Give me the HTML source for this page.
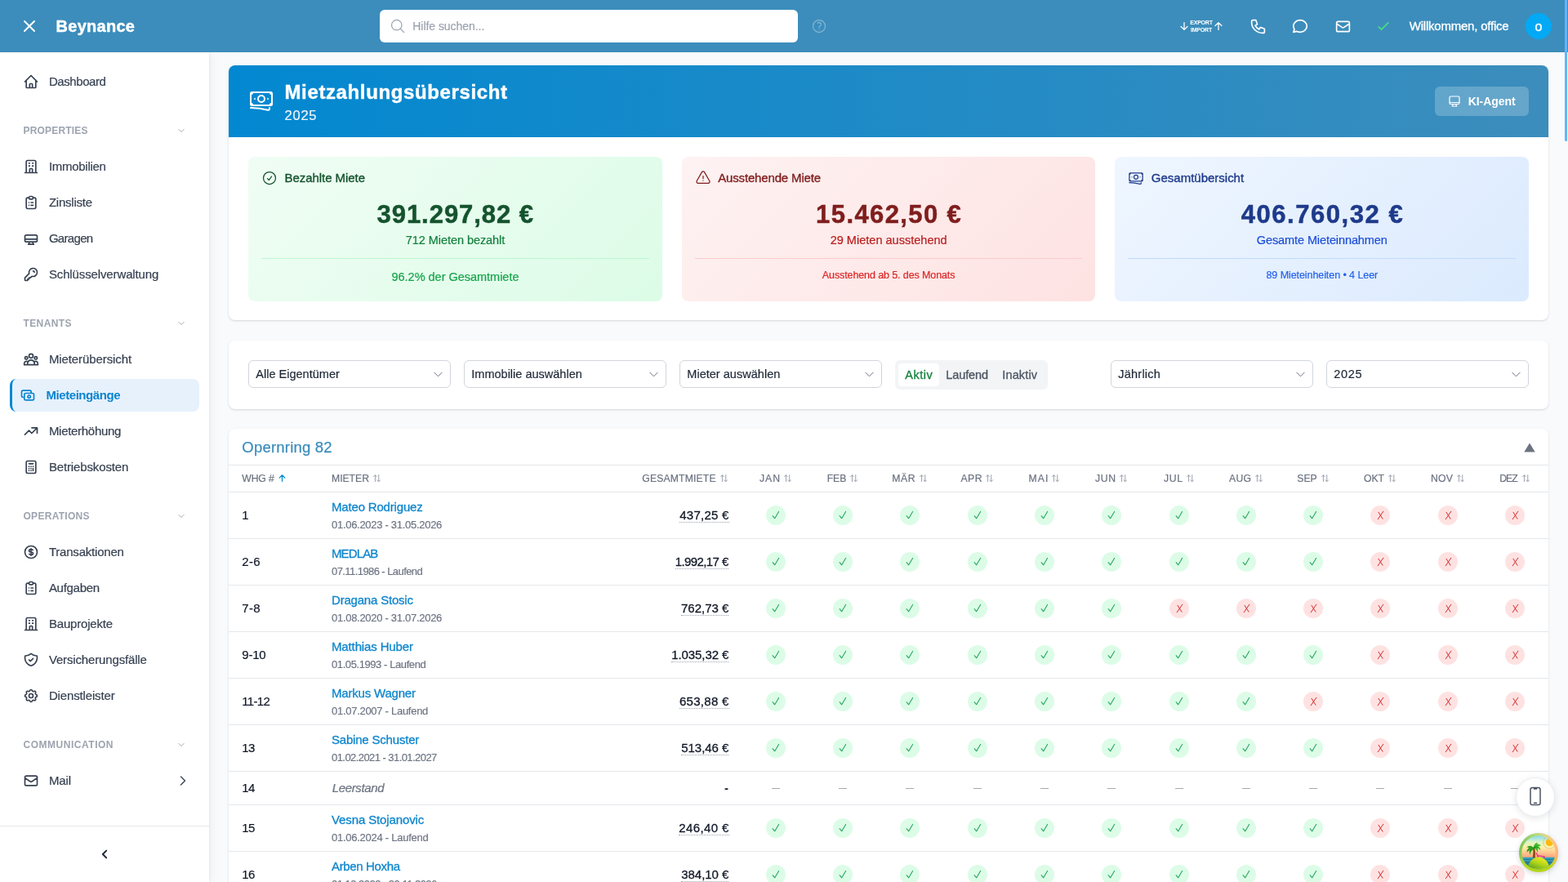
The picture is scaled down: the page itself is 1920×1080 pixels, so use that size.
<!DOCTYPE html>
<html lang="de">
<head>
<meta charset="utf-8">
<title>Beynance – Mietzahlungsübersicht</title>
<style>
*{box-sizing:border-box;margin:0;padding:0}
html,body{width:1920px;height:1080px;overflow:hidden}
body{font-family:"Liberation Sans",sans-serif;background:#f8fafc;color:#111827;position:relative}
#app{position:absolute;left:0;top:0;width:1920px;height:1080px;overflow:hidden;will-change:transform;background:#f8fafc}
.abs{position:absolute}
svg{display:block}
#topbar{position:absolute;left:0;top:0;width:1920px;height:64px;background:#3c8dbc;z-index:30}
#search{position:absolute;left:465px;top:12px;width:512px;height:40px;background:#fff;border-radius:6px}
#avatar{position:absolute;left:1868px;top:16px;width:32px;height:32px;border-radius:50%;background:#03a9f4;color:#fff;text-align:center;line-height:33px;font-size:16px;-webkit-text-stroke:.4px #fff}
.expimp{position:absolute;left:1456px;top:23px;font-size:7px;line-height:9px;color:#fff;font-weight:700;letter-spacing:-.2px;text-align:center;width:30px}
#sidebar{position:absolute;left:0;top:64px;width:256px;height:1016px;background:#fff;box-shadow:1px 0 3px rgba(15,23,42,.05),4px 0 12px rgba(15,23,42,.04);z-index:20}
.nav{position:absolute;left:12px;width:232px;height:40px;border-radius:8px}
.nav svg{position:absolute;left:16px;top:10px;color:#374151}
.nav.active{background:#e6f1fc;border-left:3px solid #0288d1}
.nav.active svg{left:9px;color:#0a84d0}
.sec svg{position:absolute;left:217px;color:#9ca3af}
#sidefoot{position:absolute;left:0;top:947px;width:256px;height:69px;border-top:1px solid #e5e7eb}
.card{position:absolute;background:#fff;border-radius:8px;box-shadow:0 1px 3px rgba(15,23,42,.10),0 1px 2px rgba(15,23,42,.06)}
#hero{position:absolute;left:280px;top:80px;width:1616px;height:88px;border-radius:8px 8px 0 0;background:linear-gradient(90deg,#0288d1 0%,#3c8dbc 100%)}
#kibtn{position:absolute;left:1477px;top:26px;width:115px;height:36px;border-radius:6px;background:rgba(255,255,255,.22)}
.stat{position:absolute;top:192px;width:506.67px;height:177px;border-radius:8px}
.stat .hr{position:absolute;left:16px;right:16px;top:124px;height:1px}
.sel{position:absolute;top:24px;width:248px;height:34px;border:1px solid #d1d5db;border-radius:6px;background:#fff}
.sel svg{position:absolute;right:7.5px;top:9px;color:#6b7280}
.row{position:absolute;left:0;width:1616px;border-top:1px solid #e5e7eb}
.dot{position:absolute;width:24px;height:24px;border-radius:50%}
.dot.g{background:#dcfce7}
.dot.r{background:#fee2e2}
.dash{position:absolute;width:10.6px;height:1px;background:#a3a8b1}
.th{position:absolute;top:0;height:33px}
</style>
</head>
<body>
<div id="app">

<div id="topbar">
<svg class="" width="24" height="24" viewBox="0 0 24 24" fill="none" stroke="#fff" stroke-width="2" stroke-linecap="round" stroke-linejoin="round" style="position:absolute;left:24px;top:20px"><path d="M6 18L18 6M6 6l12 12"/></svg>
<div style="position:absolute;top:18px;height:28px;line-height:28px;font-size:20px;color:#fff;white-space:nowrap;letter-spacing:0.286px;font-weight:700;-webkit-text-stroke:0.45px #fff;left:68.50px;">Beynance</div>
<div id="search"><svg class="" width="20" height="20" viewBox="0 0 24 24" fill="none" stroke="#9ca3af" stroke-width="1.5" stroke-linecap="round" stroke-linejoin="round" style="position:absolute;left:12px;top:10px"><path d="M21 21l-5.197-5.197m0 0A7.5 7.5 0 105.196 5.196a7.5 7.5 0 0010.607 10.607z"/></svg><div style="position:absolute;top:10px;height:20px;line-height:20px;font-size:14px;color:#9ca3af;white-space:nowrap;letter-spacing:-0.05px;-webkit-text-stroke:0.2px #9ca3af;left:40.30px;">Hilfe suchen...</div></div>
<svg class="" width="20" height="20" viewBox="0 0 24 24" fill="none" stroke="rgba(255,255,255,.35)" stroke-width="1.5" stroke-linecap="round" stroke-linejoin="round" style="position:absolute;left:993px;top:22px"><path d="M9.879 7.519c1.171-1.025 3.071-1.025 4.242 0 1.172 1.025 1.172 2.687 0 3.712-.203.179-.43.326-.67.442-.745.361-1.45.999-1.45 1.827v.75M21 12a9 9 0 11-18 0 9 9 0 0118 0zm-9 5.25h.008v.008H12v-.008z"/></svg>
<svg class="" width="14" height="14" viewBox="0 0 24 24" fill="none" stroke="#fff" stroke-width="2.2" stroke-linecap="round" stroke-linejoin="round" style="position:absolute;left:1443px;top:25px"><path d="M12 4.5v15m0 0l6.75-6.75M12 19.5l-6.75-6.75"/></svg>
<div class="expimp">EXPORT<br>IMPORT</div>
<svg class="" width="14" height="14" viewBox="0 0 24 24" fill="none" stroke="#fff" stroke-width="2.2" stroke-linecap="round" stroke-linejoin="round" style="position:absolute;left:1485px;top:25px"><path d="M12 19.5v-15m0 0l-6.75 6.75M12 4.5l6.75 6.75"/></svg>
<svg class="" width="21" height="21" viewBox="0 0 24 24" fill="none" stroke="#fff" stroke-width="1.9" stroke-linecap="round" stroke-linejoin="round" style="position:absolute;left:1529.5px;top:21.5px"><path d="M3 5a2 2 0 012-2h3.28a1 1 0 01.948.684l1.498 4.493a1 1 0 01-.502 1.21l-2.257 1.13a11.042 11.042 0 005.516 5.516l1.13-2.257a1 1 0 011.21-.502l4.493 1.498a1 1 0 01.684.949V19a2 2 0 01-2 2h-1C9.716 21 3 14.284 3 6V5z"/></svg>
<svg class="" width="22" height="22" viewBox="0 0 24 24" fill="none" stroke="#fff" stroke-width="1.9" stroke-linecap="round" stroke-linejoin="round" style="position:absolute;left:1581px;top:21px"><path d="M21 12c0 4.418-4.03 8-9 8a9.863 9.863 0 01-4.255-.949L3 20l1.395-3.72C3.512 15.042 3 13.574 3 12c0-4.418 4.03-8 9-8s9 3.582 9 8z"/></svg>
<svg class="" width="21" height="21" viewBox="0 0 24 24" fill="none" stroke="#fff" stroke-width="1.9" stroke-linecap="round" stroke-linejoin="round" style="position:absolute;left:1633.5px;top:21.8px"><path d="M3 8l7.89 5.26a2 2 0 002.22 0L21 8M5 19h14a2 2 0 002-2V7a2 2 0 00-2-2H5a2 2 0 00-2 2v10a2 2 0 002 2z"/></svg>
<svg class="" width="20" height="20" viewBox="0 0 24 24" fill="none" stroke="#4ade80" stroke-width="1.9" stroke-linecap="round" stroke-linejoin="round" style="position:absolute;left:1684.2px;top:21.7px"><path d="M5 13l4 4L19 7"/></svg>
<div style="position:absolute;top:22px;height:20px;line-height:20px;font-size:15px;color:#fff;white-space:nowrap;letter-spacing:-0.211px;-webkit-text-stroke:0.3px #fff;left:1725.70px;">Willkommen, office</div>
<div id="avatar">o</div>
</div>
<div id="sidebar">
<div class="nav" style="top:16px"><svg class="" width="20" height="20" viewBox="0 0 24 24" fill="none" stroke="currentColor" stroke-width="2" stroke-linecap="round" stroke-linejoin="round" style=""><path d="M3 12l2-2m0 0l7-7 7 7M5 10v10a1 1 0 001 1h3m10-11l2 2m-2-2v10a1 1 0 01-1 1h-3m-6 0a1 1 0 001-1v-4a1 1 0 011-1h2a1 1 0 011 1v4a1 1 0 001 1m-6 0h6"/></svg><div style="position:absolute;top:10px;height:20px;line-height:20px;font-size:15px;color:#374151;white-space:nowrap;letter-spacing:-0.422px;-webkit-text-stroke:0.2px #374151;left:47.90px;">Dashboard</div></div>
<div class="sec"><div style="position:absolute;top:88px;height:16px;line-height:16px;font-size:12px;color:#9da4b0;white-space:nowrap;letter-spacing:0.183px;font-weight:700;left:28.50px;">PROPERTIES</div><svg class="" width="10" height="10" viewBox="0 0 24 24" fill="none" stroke="#8d95a3" stroke-width="2" stroke-linecap="round" stroke-linejoin="round" style="top:91px"><path d="M19.5 8.25l-7.5 7.5-7.5-7.5"/></svg></div>
<div class="nav" style="top:120px"><svg class="" width="20" height="20" viewBox="0 0 24 24" fill="none" stroke="currentColor" stroke-width="2" stroke-linecap="round" stroke-linejoin="round" style=""><path d="M19 21V5a2 2 0 00-2-2H7a2 2 0 00-2 2v16m14 0h2m-2 0h-5m-9 0H3m2 0h5M9 7h1m-1 4h1m4-4h1m-1 4h1m-5 10v-5a1 1 0 011-1h2a1 1 0 011 1v5m-4 0h4"/></svg><div style="position:absolute;top:10px;height:20px;line-height:20px;font-size:15px;color:#374151;white-space:nowrap;letter-spacing:-0.281px;-webkit-text-stroke:0.2px #374151;left:47.90px;">Immobilien</div></div>
<div class="nav" style="top:164px"><svg class="" width="20" height="20" viewBox="0 0 24 24" fill="none" stroke="currentColor" stroke-width="2" stroke-linecap="round" stroke-linejoin="round" style=""><path d="M9 5H7a2 2 0 00-2 2v12a2 2 0 002 2h10a2 2 0 002-2V7a2 2 0 00-2-2h-2M9 5a2 2 0 002 2h2a2 2 0 002-2M9 5a2 2 0 012-2h2a2 2 0 012 2m-3 7h3m-3 4h3m-6-4h.01M9 16h.01"/></svg><div style="position:absolute;top:10px;height:20px;line-height:20px;font-size:15px;color:#374151;white-space:nowrap;letter-spacing:-0.221px;-webkit-text-stroke:0.2px #374151;left:47.90px;">Zinsliste</div></div>
<div class="nav" style="top:208px"><svg class="" width="20" height="20" viewBox="0 0 24 24" fill="none" stroke="currentColor" stroke-width="2" stroke-linecap="round" stroke-linejoin="round" style=""><path d="M5 7h14a2 2 0 012 2v6a2 2 0 01-2 2H5a2 2 0 01-2-2V9a2 2 0 012-2zM3 13h18M9.75 17L9 19.6l-1 1h8l-1-1-.75-2.6"/></svg><div style="position:absolute;top:10px;height:20px;line-height:20px;font-size:15px;color:#374151;white-space:nowrap;letter-spacing:-0.688px;-webkit-text-stroke:0.2px #374151;left:47.90px;">Garagen</div></div>
<div class="nav" style="top:252px"><svg class="" width="20" height="20" viewBox="0 0 24 24" fill="none" stroke="currentColor" stroke-width="2" stroke-linecap="round" stroke-linejoin="round" style=""><path d="M15 7a2 2 0 012 2m4 0a6 6 0 01-7.743 5.743L11 17H9v2H7v2H4a1 1 0 01-1-1v-2.586a1 1 0 01.293-.707l5.964-5.964A6 6 0 1121 9z"/></svg><div style="position:absolute;top:10px;height:20px;line-height:20px;font-size:15px;color:#374151;white-space:nowrap;letter-spacing:-0.124px;-webkit-text-stroke:0.2px #374151;left:47.90px;">Schlüsselverwaltung</div></div>
<div class="sec"><div style="position:absolute;top:324px;height:16px;line-height:16px;font-size:12px;color:#9da4b0;white-space:nowrap;letter-spacing:0.389px;font-weight:700;left:28.50px;">TENANTS</div><svg class="" width="10" height="10" viewBox="0 0 24 24" fill="none" stroke="#8d95a3" stroke-width="2" stroke-linecap="round" stroke-linejoin="round" style="top:327px"><path d="M19.5 8.25l-7.5 7.5-7.5-7.5"/></svg></div>
<div class="nav" style="top:356px"><svg class="" width="20" height="20" viewBox="0 0 24 24" fill="none" stroke="currentColor" stroke-width="2" stroke-linecap="round" stroke-linejoin="round" style=""><path d="M17 20h5v-2a3 3 0 00-5.356-1.857M17 20H7m10 0v-2c0-.656-.126-1.283-.356-1.857M7 20H2v-2a3 3 0 015.356-1.857M7 20v-2c0-.656.126-1.283.356-1.857m0 0a5.002 5.002 0 019.288 0M15 7a3 3 0 11-6 0 3 3 0 016 0zm6 3a2 2 0 11-4 0 2 2 0 014 0zM7 10a2 2 0 11-4 0 2 2 0 014 0z"/></svg><div style="position:absolute;top:10px;height:20px;line-height:20px;font-size:15px;color:#374151;white-space:nowrap;letter-spacing:-0.092px;-webkit-text-stroke:0.2px #374151;left:47.90px;">Mieterübersicht</div></div>
<div class="nav active" style="top:400px"><svg class="" width="20" height="20" viewBox="0 0 24 24" fill="none" stroke="currentColor" stroke-width="2" stroke-linecap="round" stroke-linejoin="round" style=""><path d="M17 9V7a2 2 0 00-2-2H5a2 2 0 00-2 2v6a2 2 0 002 2h2m2 4h10a2 2 0 002-2v-6a2 2 0 00-2-2H9a2 2 0 00-2 2v6a2 2 0 002 2zm7-5a2 2 0 11-4 0 2 2 0 014 0z"/></svg><div style="position:absolute;top:10px;height:20px;line-height:20px;font-size:15px;color:#0a84d0;white-space:nowrap;letter-spacing:-0.441px;font-weight:700;left:41.50px;">Mieteingänge</div></div>
<div class="nav" style="top:444px"><svg class="" width="20" height="20" viewBox="0 0 24 24" fill="none" stroke="currentColor" stroke-width="2" stroke-linecap="round" stroke-linejoin="round" style=""><path d="M13 7h8m0 0v8m0-8l-8 8-4-4-6 6"/></svg><div style="position:absolute;top:10px;height:20px;line-height:20px;font-size:15px;color:#374151;white-space:nowrap;letter-spacing:-0.293px;-webkit-text-stroke:0.2px #374151;left:47.90px;">Mieterhöhung</div></div>
<div class="nav" style="top:488px"><svg class="" width="20" height="20" viewBox="0 0 24 24" fill="none" stroke="currentColor" stroke-width="2" stroke-linecap="round" stroke-linejoin="round" style=""><path d="M9 7h6m0 10v-3m-3 3h.01M9 17h.01M9 14h.01M12 14h.01M15 11h.01M12 11h.01M9 11h.01M7 21h10a2 2 0 002-2V5a2 2 0 00-2-2H7a2 2 0 00-2 2v14a2 2 0 002 2z"/></svg><div style="position:absolute;top:10px;height:20px;line-height:20px;font-size:15px;color:#374151;white-space:nowrap;letter-spacing:-0.133px;-webkit-text-stroke:0.2px #374151;left:47.90px;">Betriebskosten</div></div>
<div class="sec"><div style="position:absolute;top:560px;height:16px;line-height:16px;font-size:12px;color:#9da4b0;white-space:nowrap;letter-spacing:0.283px;font-weight:700;left:28.50px;">OPERATIONS</div><svg class="" width="10" height="10" viewBox="0 0 24 24" fill="none" stroke="#8d95a3" stroke-width="2" stroke-linecap="round" stroke-linejoin="round" style="top:563px"><path d="M19.5 8.25l-7.5 7.5-7.5-7.5"/></svg></div>
<div class="nav" style="top:592px"><svg class="" width="20" height="20" viewBox="0 0 24 24" fill="none" stroke="currentColor" stroke-width="2" stroke-linecap="round" stroke-linejoin="round" style=""><path d="M12 8c-1.657 0-3 .895-3 2s1.343 2 3 2 3 .895 3 2-1.343 2-3 2m0-8c1.11 0 2.08.402 2.599 1M12 8V7m0 1v8m0 0v1m0-1c-1.11 0-2.08-.402-2.599-1M21 12a9 9 0 11-18 0 9 9 0 0118 0z"/></svg><div style="position:absolute;top:10px;height:20px;line-height:20px;font-size:15px;color:#374151;white-space:nowrap;letter-spacing:-0.208px;-webkit-text-stroke:0.2px #374151;left:47.90px;">Transaktionen</div></div>
<div class="nav" style="top:636px"><svg class="" width="20" height="20" viewBox="0 0 24 24" fill="none" stroke="currentColor" stroke-width="2" stroke-linecap="round" stroke-linejoin="round" style=""><path d="M9 5H7a2 2 0 00-2 2v12a2 2 0 002 2h10a2 2 0 002-2V7a2 2 0 00-2-2h-2M9 5a2 2 0 002 2h2a2 2 0 002-2M9 5a2 2 0 012-2h2a2 2 0 012 2m-3 7h3m-3 4h3m-6-4h.01M9 16h.01"/></svg><div style="position:absolute;top:10px;height:20px;line-height:20px;font-size:15px;color:#374151;white-space:nowrap;letter-spacing:-0.283px;-webkit-text-stroke:0.2px #374151;left:47.90px;">Aufgaben</div></div>
<div class="nav" style="top:680px"><svg class="" width="20" height="20" viewBox="0 0 24 24" fill="none" stroke="currentColor" stroke-width="2" stroke-linecap="round" stroke-linejoin="round" style=""><path d="M19 21V5a2 2 0 00-2-2H7a2 2 0 00-2 2v16m14 0h2m-2 0h-5m-9 0H3m2 0h5M9 7h1m-1 4h1m4-4h1m-1 4h1m-5 10v-5a1 1 0 011-1h2a1 1 0 011 1v5m-4 0h4"/></svg><div style="position:absolute;top:10px;height:20px;line-height:20px;font-size:15px;color:#374151;white-space:nowrap;letter-spacing:-0.181px;-webkit-text-stroke:0.2px #374151;left:47.90px;">Bauprojekte</div></div>
<div class="nav" style="top:724px"><svg class="" width="20" height="20" viewBox="0 0 24 24" fill="none" stroke="currentColor" stroke-width="2" stroke-linecap="round" stroke-linejoin="round" style=""><path d="M9 12l2 2 4-4m5.618-4.016A11.955 11.955 0 0112 2.944a11.955 11.955 0 01-8.618 3.04A12.02 12.02 0 003 9c0 5.591 3.824 10.29 9 11.622 5.176-1.332 9-6.03 9-11.622 0-1.042-.133-2.052-.382-3.016z"/></svg><div style="position:absolute;top:10px;height:20px;line-height:20px;font-size:15px;color:#374151;white-space:nowrap;letter-spacing:-0.151px;-webkit-text-stroke:0.2px #374151;left:47.90px;">Versicherungsfälle</div></div>
<div class="nav" style="top:768px"><svg class="" width="20" height="20" viewBox="0 0 24 24" fill="none" stroke="currentColor" stroke-width="2" stroke-linecap="round" stroke-linejoin="round" style=""><path d="M10.325 4.317c.426-1.756 2.924-1.756 3.35 0a1.724 1.724 0 002.573 1.066c1.543-.94 3.31.826 2.37 2.37a1.724 1.724 0 001.065 2.572c1.756.426 1.756 2.924 0 3.35a1.724 1.724 0 00-1.066 2.573c.94 1.543-.826 3.31-2.37 2.37a1.724 1.724 0 00-2.572 1.065c-.426 1.756-2.924 1.756-3.35 0a1.724 1.724 0 00-2.573-1.066c-1.543.94-3.31-.826-2.37-2.37a1.724 1.724 0 00-1.065-2.572c-1.756-.426-1.756-2.924 0-3.35a1.724 1.724 0 001.066-2.573c-.94-1.543.826-3.31 2.37-2.37.996.608 2.296.07 2.572-1.065z"/><path d="M15 12a3 3 0 11-6 0 3 3 0 016 0z"/></svg><div style="position:absolute;top:10px;height:20px;line-height:20px;font-size:15px;color:#374151;white-space:nowrap;letter-spacing:-0.148px;-webkit-text-stroke:0.2px #374151;left:47.90px;">Dienstleister</div></div>
<div class="sec"><div style="position:absolute;top:840px;height:16px;line-height:16px;font-size:12px;color:#9da4b0;white-space:nowrap;letter-spacing:0.52px;font-weight:700;left:28.50px;">COMMUNICATION</div><svg class="" width="10" height="10" viewBox="0 0 24 24" fill="none" stroke="#8d95a3" stroke-width="2" stroke-linecap="round" stroke-linejoin="round" style="top:843px"><path d="M19.5 8.25l-7.5 7.5-7.5-7.5"/></svg></div>
<div class="nav" style="top:872px"><svg class="" width="20" height="20" viewBox="0 0 24 24" fill="none" stroke="currentColor" stroke-width="2" stroke-linecap="round" stroke-linejoin="round" style=""><path d="M3 8l7.89 5.26a2 2 0 002.22 0L21 8M5 19h14a2 2 0 002-2V7a2 2 0 00-2-2H5a2 2 0 00-2 2v10a2 2 0 002 2z"/></svg><div style="position:absolute;top:10px;height:20px;line-height:20px;font-size:15px;color:#374151;white-space:nowrap;letter-spacing:-0.087px;-webkit-text-stroke:0.2px #374151;left:47.90px;">Mail</div><svg class="" width="16" height="16" viewBox="0 0 24 24" fill="none" stroke="#374151" stroke-width="2" stroke-linecap="round" stroke-linejoin="round" style="left:204px;top:12px"><path d="M8.25 4.5l7.5 7.5-7.5 7.5"/></svg></div>
<div id="sidefoot"><svg class="" width="14" height="14" viewBox="0 0 24 24" fill="none" stroke="#1f2937" stroke-width="3.5" stroke-linecap="round" stroke-linejoin="round" style="position:absolute;left:121px;top:27px"><path d="M15.75 19.5L8.25 12l7.5-7.5"/></svg></div>
</div>
<div class="card" style="left:280px;top:80px;width:1616px;height:312.3px"></div>
<div id="hero">
<svg class="" width="32" height="32" viewBox="0 0 24 24" fill="none" stroke="#fff" stroke-width="1.5" stroke-linecap="round" stroke-linejoin="round" style="position:absolute;left:24px;top:27.3px"><path d="M2.25 18.75a60.07 60.07 0 0115.797 2.101c.727.198 1.453-.342 1.453-1.096V18.75M3.75 4.5v.75A.75.75 0 013 6h-.75m0 0v-.375c0-.621.504-1.125 1.125-1.125H20.25M2.25 6v9m18-10.5v.75c0 .414.336.75.75.75h.75m-1.5-1.5h.375c.621 0 1.125.504 1.125 1.125v9.75c0 .621-.504 1.125-1.125 1.125h-.375m1.5-1.5H21a.75.75 0 00-.75.75v.75m0 0H3.75m0 0h-.375a1.125 1.125 0 01-1.125-1.125V15m1.5 1.5v-.75A.75.75 0 003 15h-.75M15 10.5a3 3 0 11-6 0 3 3 0 016 0zm3 0h.008v.008H18V10.5zm-12 0h.008v.008H6V10.5z"/></svg>
<div style="position:absolute;top:16px;height:34px;line-height:34px;font-size:24px;color:#fff;white-space:nowrap;letter-spacing:0.623px;font-weight:700;-webkit-text-stroke:0.4px #fff;left:68.50px;">Mietzahlungsübersicht</div>
<div style="position:absolute;top:49px;height:24px;line-height:24px;font-size:16.5px;color:rgba(255,255,255,.92);white-space:nowrap;letter-spacing:0.763px;-webkit-text-stroke:0.2px rgba(255,255,255,.92);left:68.50px;">2025</div>
<div id="kibtn"><svg class="" width="16" height="16" viewBox="0 0 24 24" fill="none" stroke="#fff" stroke-width="1.8" stroke-linecap="round" stroke-linejoin="round" style="position:absolute;left:16px;top:9.5px"><path d="M9 17.25v1.007a3 3 0 01-.879 2.122L7.5 21h9l-.621-.621A3 3 0 0115 18.257V17.25m6-12V15a2.25 2.25 0 01-2.25 2.25H5.25A2.25 2.25 0 013 15V5.25m18 0A2.25 2.25 0 0018.75 3H5.25A2.25 2.25 0 003 5.25m18 0V12a2.25 2.25 0 01-2.25 2.25H5.25A2.25 2.25 0 013 12V5.25"/></svg><div style="position:absolute;top:8px;height:20px;line-height:20px;font-size:14px;color:#fff;white-space:nowrap;letter-spacing:-0.046px;font-weight:700;left:40.70px;">KI-Agent</div></div>
</div>
<div class="stat" style="left:304px;background:linear-gradient(135deg,#f0fdf4 0%,#dcfce7 100%)">
<svg class="" width="20" height="20" viewBox="0 0 24 24" fill="none" stroke="#14532d" stroke-width="1.5" stroke-linecap="round" stroke-linejoin="round" style="position:absolute;left:16px;top:16px"><path d="M9 12.75L11.25 15 15 9.75M21 12a9 9 0 11-18 0 9 9 0 0118 0z"/></svg>
<div style="position:absolute;top:16px;height:20px;line-height:20px;font-size:15px;color:#14532d;white-space:nowrap;letter-spacing:-0.056px;-webkit-text-stroke:0.35px #14532d;left:44.50px;">Bezahlte Miete</div>
<div style="position:absolute;top:49px;height:44px;line-height:44px;font-size:31px;color:#14532d;white-space:nowrap;letter-spacing:0.963px;font-weight:700;-webkit-text-stroke:0.5px #14532d;left:-146.22px;width:800px;text-align:center;">391.297,82 €</div>
<div style="position:absolute;top:92px;height:20px;line-height:20px;font-size:14.5px;color:#15803d;white-space:nowrap;letter-spacing:-0.054px;-webkit-text-stroke:0.2px #15803d;left:-146.53px;width:800px;text-align:center;">712 Mieten bezahlt</div>
<div class="hr" style="background:#bbf7d0"></div>
<div style="position:absolute;top:137px;height:20px;line-height:20px;font-size:14.5px;color:#16a34a;white-space:nowrap;letter-spacing:-0.018px;-webkit-text-stroke:0.2px #16a34a;left:-146.51px;width:800px;text-align:center;">96.2% der Gesamtmiete</div>
</div>
<div class="stat" style="left:834.67px;background:linear-gradient(135deg,#fef2f2 0%,#fee2e2 100%)">
<svg class="" width="20" height="20" viewBox="0 0 24 24" fill="none" stroke="#7f1d1d" stroke-width="1.5" stroke-linecap="round" stroke-linejoin="round" style="position:absolute;left:16px;top:16px"><path d="M12 9v3.75m-9.303 3.376c-.866 1.5.217 3.374 1.948 3.374h14.71c1.73 0 2.813-1.874 1.948-3.374L13.949 3.378c-.866-1.5-3.032-1.5-3.898 0L2.697 16.126zM12 15.75h.007v.008H12v-.008z"/></svg>
<div style="position:absolute;top:16px;height:20px;line-height:20px;font-size:15px;color:#7f1d1d;white-space:nowrap;letter-spacing:-0.151px;-webkit-text-stroke:0.35px #7f1d1d;left:44.50px;">Ausstehende Miete</div>
<div style="position:absolute;top:49px;height:44px;line-height:44px;font-size:31px;color:#7f1d1d;white-space:nowrap;letter-spacing:1.393px;font-weight:700;-webkit-text-stroke:0.5px #7f1d1d;left:-146.01px;width:800px;text-align:center;">15.462,50 €</div>
<div style="position:absolute;top:92px;height:20px;line-height:20px;font-size:14.5px;color:#b91c1c;white-space:nowrap;letter-spacing:0.017px;-webkit-text-stroke:0.2px #b91c1c;left:-146.49px;width:800px;text-align:center;">29 Mieten ausstehend</div>
<div class="hr" style="background:#fecaca"></div>
<div style="position:absolute;top:136px;height:18px;line-height:18px;font-size:12.5px;color:#dc2626;white-space:nowrap;letter-spacing:-0.107px;-webkit-text-stroke:0.2px #dc2626;left:-146.55px;width:800px;text-align:center;">Ausstehend ab 5. des Monats</div>
</div>
<div class="stat" style="left:1365.33px;background:linear-gradient(135deg,#eff6ff 0%,#dbeafe 100%)">
<svg class="" width="20" height="20" viewBox="0 0 24 24" fill="none" stroke="#1e3a8a" stroke-width="1.5" stroke-linecap="round" stroke-linejoin="round" style="position:absolute;left:16px;top:16px"><path d="M2.25 18.75a60.07 60.07 0 0115.797 2.101c.727.198 1.453-.342 1.453-1.096V18.75M3.75 4.5v.75A.75.75 0 013 6h-.75m0 0v-.375c0-.621.504-1.125 1.125-1.125H20.25M2.25 6v9m18-10.5v.75c0 .414.336.75.75.75h.75m-1.5-1.5h.375c.621 0 1.125.504 1.125 1.125v9.75c0 .621-.504 1.125-1.125 1.125h-.375m1.5-1.5H21a.75.75 0 00-.75.75v.75m0 0H3.75m0 0h-.375a1.125 1.125 0 01-1.125-1.125V15m1.5 1.5v-.75A.75.75 0 003 15h-.75M15 10.5a3 3 0 11-6 0 3 3 0 016 0zm3 0h.008v.008H18V10.5zm-12 0h.008v.008H6V10.5z"/></svg>
<div style="position:absolute;top:16px;height:20px;line-height:20px;font-size:15px;color:#1e3a8a;white-space:nowrap;letter-spacing:-0.006px;-webkit-text-stroke:0.35px #1e3a8a;left:44.50px;">Gesamtübersicht</div>
<div style="position:absolute;top:49px;height:44px;line-height:44px;font-size:31px;color:#1e3a8a;white-space:nowrap;letter-spacing:1.545px;font-weight:700;-webkit-text-stroke:0.5px #1e3a8a;left:-145.93px;width:800px;text-align:center;">406.760,32 €</div>
<div style="position:absolute;top:92px;height:20px;line-height:20px;font-size:14.5px;color:#1d4ed8;white-space:nowrap;letter-spacing:-0.1px;-webkit-text-stroke:0.2px #1d4ed8;left:-146.55px;width:800px;text-align:center;">Gesamte Mieteinnahmen</div>
<div class="hr" style="background:#bfdbfe"></div>
<div style="position:absolute;top:136px;height:18px;line-height:18px;font-size:12.5px;color:#2563eb;white-space:nowrap;letter-spacing:-0.075px;-webkit-text-stroke:0.2px #2563eb;left:-146.54px;width:800px;text-align:center;">89 Mieteinheiten • 4 Leer</div>
</div>
<div class="card" style="left:280px;top:417px;width:1616px;height:84px">
<div class="sel" style="left:24px"><div style="position:absolute;top:6px;height:20px;line-height:20px;font-size:14.5px;color:#1f2937;white-space:nowrap;letter-spacing:0.01px;-webkit-text-stroke:0.2px #1f2937;left:8.30px;">Alle Eigentümer</div><svg class="" width="15" height="15" viewBox="0 0 24 24" fill="none" stroke="currentColor" stroke-width="1.6" stroke-linecap="round" stroke-linejoin="round" style=""><path d="M19.5 8.25l-7.5 7.5-7.5-7.5"/></svg></div>
<div class="sel" style="left:288px"><div style="position:absolute;top:6px;height:20px;line-height:20px;font-size:14.5px;color:#1f2937;white-space:nowrap;letter-spacing:0.005px;-webkit-text-stroke:0.2px #1f2937;left:8.30px;">Immobilie auswählen</div><svg class="" width="15" height="15" viewBox="0 0 24 24" fill="none" stroke="currentColor" stroke-width="1.6" stroke-linecap="round" stroke-linejoin="round" style=""><path d="M19.5 8.25l-7.5 7.5-7.5-7.5"/></svg></div>
<div class="sel" style="left:552px"><div style="position:absolute;top:6px;height:20px;line-height:20px;font-size:14.5px;color:#1f2937;white-space:nowrap;letter-spacing:0.024px;-webkit-text-stroke:0.2px #1f2937;left:8.30px;">Mieter auswählen</div><svg class="" width="15" height="15" viewBox="0 0 24 24" fill="none" stroke="currentColor" stroke-width="1.6" stroke-linecap="round" stroke-linejoin="round" style=""><path d="M19.5 8.25l-7.5 7.5-7.5-7.5"/></svg></div>
<div class="abs" style="left:816px;top:24px;width:186.5px;height:35.7px;background:#f3f4f6;border-radius:6px"></div>
<div class="abs" style="left:820px;top:28px;width:50px;height:27.7px;background:#fff;border-radius:4px"></div>
<div style="position:absolute;top:32px;height:20px;line-height:20px;font-size:14.5px;color:#15803d;white-space:nowrap;letter-spacing:0.495px;-webkit-text-stroke:0.3px #15803d;left:828.30px;">Aktiv</div>
<div style="position:absolute;top:32px;height:20px;line-height:20px;font-size:14.5px;color:#4b5563;white-space:nowrap;letter-spacing:-0.12px;-webkit-text-stroke:0.3px #4b5563;left:878.30px;">Laufend</div>
<div style="position:absolute;top:32px;height:20px;line-height:20px;font-size:14.5px;color:#4b5563;white-space:nowrap;letter-spacing:0.133px;-webkit-text-stroke:0.3px #4b5563;left:947.30px;">Inaktiv</div>
<div class="sel" style="left:1080px"><div style="position:absolute;top:6px;height:20px;line-height:20px;font-size:14.5px;color:#1f2937;white-space:nowrap;letter-spacing:0.219px;-webkit-text-stroke:0.2px #1f2937;left:8.30px;">Jährlich</div><svg class="" width="15" height="15" viewBox="0 0 24 24" fill="none" stroke="currentColor" stroke-width="1.6" stroke-linecap="round" stroke-linejoin="round" style=""><path d="M19.5 8.25l-7.5 7.5-7.5-7.5"/></svg></div>
<div class="sel" style="left:1344px"><div style="position:absolute;top:6px;height:20px;line-height:20px;font-size:14.5px;color:#1f2937;white-space:nowrap;letter-spacing:0.679px;-webkit-text-stroke:0.2px #1f2937;left:8.30px;">2025</div><svg class="" width="15" height="15" viewBox="0 0 24 24" fill="none" stroke="currentColor" stroke-width="1.6" stroke-linecap="round" stroke-linejoin="round" style=""><path d="M19.5 8.25l-7.5 7.5-7.5-7.5"/></svg></div>
</div>
<div class="card" style="left:280px;top:525px;width:1616px;height:600px;overflow:hidden">
<div style="position:absolute;top:10px;height:26px;line-height:26px;font-size:18.5px;color:#3c8dbc;white-space:nowrap;letter-spacing:0.211px;-webkit-text-stroke:0.25px #3c8dbc;left:16.30px;">Opernring 82</div>
<svg class="abs" style="left:1586px;top:16.5px" width="14" height="12" viewBox="0 0 14 12"><path d="M7 .4L13.7 11.5H.3z" fill="#6b7280"/></svg>
<div class="abs" style="left:0;top:44px;width:1616px;height:34px;border-top:1px solid #e5e7eb">
<div style="position:absolute;top:7px;height:18px;line-height:18px;font-size:12.2px;color:#6b7280;white-space:nowrap;letter-spacing:-0.148px;left:16.30px;-webkit-text-stroke:.2px #6b7280;">WHG #</div>
<svg class="abs" style="left:60.60px;top:10.8px" width="9" height="9" viewBox="0 0 10 10" fill="none" stroke="#0288d1" stroke-width="1.4" stroke-linecap="round" stroke-linejoin="round"><path d="M5 9.3V.9M1.3 4.6L5 .9l3.7 3.7"/></svg>
<div style="position:absolute;top:7px;height:18px;line-height:18px;font-size:12.2px;color:#6b7280;white-space:nowrap;letter-spacing:-0.018px;left:126.00px;-webkit-text-stroke:.2px #6b7280;">MIETER</div>
<svg class="abs" style="left:177.10px;top:10.8px" width="9.4" height="9.4" viewBox="0 0 10 10" fill="none" stroke="#9aa1ad" stroke-width="1.05" stroke-linecap="round" stroke-linejoin="round"><path d="M2.6 9.4V.8M.6 2.8l2-2 2 2M7.2.6v8.6M5.2 7.2l2 2 2-2"/></svg>
<div style="position:absolute;top:7px;height:18px;line-height:18px;font-size:12.2px;color:#6b7280;white-space:nowrap;letter-spacing:0.151px;left:506.30px;-webkit-text-stroke:.2px #6b7280;">GESAMTMIETE</div>
<svg class="abs" style="left:601.80px;top:10.8px" width="9.4" height="9.4" viewBox="0 0 10 10" fill="none" stroke="#9aa1ad" stroke-width="1.05" stroke-linecap="round" stroke-linejoin="round"><path d="M2.6 9.4V.8M.6 2.8l2-2 2 2M7.2.6v8.6M5.2 7.2l2 2 2-2"/></svg>
<div style="position:absolute;top:7px;height:18px;line-height:18px;font-size:12.2px;color:#6b7280;white-space:nowrap;letter-spacing:0.977px;left:650.00px;-webkit-text-stroke:.2px #6b7280;">JAN</div>
<svg class="abs" style="left:679.80px;top:10.8px" width="9.4" height="9.4" viewBox="0 0 10 10" fill="none" stroke="#9aa1ad" stroke-width="1.05" stroke-linecap="round" stroke-linejoin="round"><path d="M2.6 9.4V.8M.6 2.8l2-2 2 2M7.2.6v8.6M5.2 7.2l2 2 2-2"/></svg>
<div style="position:absolute;top:7px;height:18px;line-height:18px;font-size:12.2px;color:#6b7280;white-space:nowrap;letter-spacing:-0.014px;left:732.65px;-webkit-text-stroke:.2px #6b7280;">FEB</div>
<svg class="abs" style="left:761.15px;top:10.8px" width="9.4" height="9.4" viewBox="0 0 10 10" fill="none" stroke="#9aa1ad" stroke-width="1.05" stroke-linecap="round" stroke-linejoin="round"><path d="M2.6 9.4V.8M.6 2.8l2-2 2 2M7.2.6v8.6M5.2 7.2l2 2 2-2"/></svg>
<div style="position:absolute;top:7px;height:18px;line-height:18px;font-size:12.2px;color:#6b7280;white-space:nowrap;letter-spacing:0.646px;left:812.30px;-webkit-text-stroke:.2px #6b7280;">MÄR</div>
<svg class="abs" style="left:845.50px;top:10.8px" width="9.4" height="9.4" viewBox="0 0 10 10" fill="none" stroke="#9aa1ad" stroke-width="1.05" stroke-linecap="round" stroke-linejoin="round"><path d="M2.6 9.4V.8M.6 2.8l2-2 2 2M7.2.6v8.6M5.2 7.2l2 2 2-2"/></svg>
<div style="position:absolute;top:7px;height:18px;line-height:18px;font-size:12.2px;color:#6b7280;white-space:nowrap;letter-spacing:0.458px;left:896.50px;-webkit-text-stroke:.2px #6b7280;">APR</div>
<svg class="abs" style="left:927.30px;top:10.8px" width="9.4" height="9.4" viewBox="0 0 10 10" fill="none" stroke="#9aa1ad" stroke-width="1.05" stroke-linecap="round" stroke-linejoin="round"><path d="M2.6 9.4V.8M.6 2.8l2-2 2 2M7.2.6v8.6M5.2 7.2l2 2 2-2"/></svg>
<div style="position:absolute;top:7px;height:18px;line-height:18px;font-size:12.2px;color:#6b7280;white-space:nowrap;letter-spacing:1.154px;left:979.50px;-webkit-text-stroke:.2px #6b7280;">MAI</div>
<svg class="abs" style="left:1008.30px;top:10.8px" width="9.4" height="9.4" viewBox="0 0 10 10" fill="none" stroke="#9aa1ad" stroke-width="1.05" stroke-linecap="round" stroke-linejoin="round"><path d="M2.6 9.4V.8M.6 2.8l2-2 2 2M7.2.6v8.6M5.2 7.2l2 2 2-2"/></svg>
<div style="position:absolute;top:7px;height:18px;line-height:18px;font-size:12.2px;color:#6b7280;white-space:nowrap;letter-spacing:0.642px;left:1061.00px;-webkit-text-stroke:.2px #6b7280;">JUN</div>
<svg class="abs" style="left:1090.80px;top:10.8px" width="9.4" height="9.4" viewBox="0 0 10 10" fill="none" stroke="#9aa1ad" stroke-width="1.05" stroke-linecap="round" stroke-linejoin="round"><path d="M2.6 9.4V.8M.6 2.8l2-2 2 2M7.2.6v8.6M5.2 7.2l2 2 2-2"/></svg>
<div style="position:absolute;top:7px;height:18px;line-height:18px;font-size:12.2px;color:#6b7280;white-space:nowrap;letter-spacing:0.654px;left:1145.00px;-webkit-text-stroke:.2px #6b7280;">JUL</div>
<svg class="abs" style="left:1172.80px;top:10.8px" width="9.4" height="9.4" viewBox="0 0 10 10" fill="none" stroke="#9aa1ad" stroke-width="1.05" stroke-linecap="round" stroke-linejoin="round"><path d="M2.6 9.4V.8M.6 2.8l2-2 2 2M7.2.6v8.6M5.2 7.2l2 2 2-2"/></svg>
<div style="position:absolute;top:7px;height:18px;line-height:18px;font-size:12.2px;color:#6b7280;white-space:nowrap;letter-spacing:0.281px;left:1225.00px;-webkit-text-stroke:.2px #6b7280;">AUG</div>
<svg class="abs" style="left:1256.80px;top:10.8px" width="9.4" height="9.4" viewBox="0 0 10 10" fill="none" stroke="#9aa1ad" stroke-width="1.05" stroke-linecap="round" stroke-linejoin="round"><path d="M2.6 9.4V.8M.6 2.8l2-2 2 2M7.2.6v8.6M5.2 7.2l2 2 2-2"/></svg>
<div style="position:absolute;top:7px;height:18px;line-height:18px;font-size:12.2px;color:#6b7280;white-space:nowrap;letter-spacing:0.044px;left:1308.25px;-webkit-text-stroke:.2px #6b7280;">SEP</div>
<svg class="abs" style="left:1337.55px;top:10.8px" width="9.4" height="9.4" viewBox="0 0 10 10" fill="none" stroke="#9aa1ad" stroke-width="1.05" stroke-linecap="round" stroke-linejoin="round"><path d="M2.6 9.4V.8M.6 2.8l2-2 2 2M7.2.6v8.6M5.2 7.2l2 2 2-2"/></svg>
<div style="position:absolute;top:7px;height:18px;line-height:18px;font-size:12.2px;color:#6b7280;white-space:nowrap;letter-spacing:-0.042px;left:1390.00px;-webkit-text-stroke:.2px #6b7280;">OKT</div>
<svg class="abs" style="left:1419.80px;top:10.8px" width="9.4" height="9.4" viewBox="0 0 10 10" fill="none" stroke="#9aa1ad" stroke-width="1.05" stroke-linecap="round" stroke-linejoin="round"><path d="M2.6 9.4V.8M.6 2.8l2-2 2 2M7.2.6v8.6M5.2 7.2l2 2 2-2"/></svg>
<div style="position:absolute;top:7px;height:18px;line-height:18px;font-size:12.2px;color:#6b7280;white-space:nowrap;letter-spacing:0.281px;left:1472.00px;-webkit-text-stroke:.2px #6b7280;">NOV</div>
<svg class="abs" style="left:1503.80px;top:10.8px" width="9.4" height="9.4" viewBox="0 0 10 10" fill="none" stroke="#9aa1ad" stroke-width="1.05" stroke-linecap="round" stroke-linejoin="round"><path d="M2.6 9.4V.8M.6 2.8l2-2 2 2M7.2.6v8.6M5.2 7.2l2 2 2-2"/></svg>
<div style="position:absolute;top:7px;height:18px;line-height:18px;font-size:12.2px;color:#6b7280;white-space:nowrap;letter-spacing:-0.9px;left:1556.20px;-webkit-text-stroke:.2px #6b7280;">DEZ</div>
<svg class="abs" style="left:1583.60px;top:10.8px" width="9.4" height="9.4" viewBox="0 0 10 10" fill="none" stroke="#9aa1ad" stroke-width="1.05" stroke-linecap="round" stroke-linejoin="round"><path d="M2.6 9.4V.8M.6 2.8l2-2 2 2M7.2.6v8.6M5.2 7.2l2 2 2-2"/></svg>
</div>
<div class="row" style="top:77px;height:57px">
<div style="position:absolute;top:18px;height:20px;line-height:20px;font-size:15px;color:#111827;white-space:nowrap;letter-spacing:-0.7px;-webkit-text-stroke:0.2px #111827;left:16.30px;">1</div>
<div style="position:absolute;top:8px;height:20px;line-height:20px;font-size:15px;color:#0f86cc;white-space:nowrap;letter-spacing:-0.18px;-webkit-text-stroke:0.3px #0f86cc;left:126.00px;">Mateo Rodriguez</div>
<div style="position:absolute;top:31px;height:18px;line-height:18px;font-size:13px;color:#6b7280;white-space:nowrap;letter-spacing:-0.29px;-webkit-text-stroke:0.15px #6b7280;left:126.00px;">01.06.2023 - 31.05.2026</div>
<div style="position:absolute;top:18px;height:19px;line-height:19px;font-size:15px;color:#111827;white-space:nowrap;letter-spacing:0.229px;right:1003.48px;border-bottom:1px dotted #9ca3af;-webkit-text-stroke:.3px #111827;">437,25 €</div>
<div class="dot g" style="left:658.00px;top:16px"><svg width="24" height="24" viewBox="0 0 24 24" fill="none" stroke="#1fa458" stroke-width="1.05" stroke-linecap="round" stroke-linejoin="round"><path d="M8.1 12.7l2.6 3.1L15.6 7.4"/></svg></div>
<div class="dot g" style="left:740.00px;top:16px"><svg width="24" height="24" viewBox="0 0 24 24" fill="none" stroke="#1fa458" stroke-width="1.05" stroke-linecap="round" stroke-linejoin="round"><path d="M8.1 12.7l2.6 3.1L15.6 7.4"/></svg></div>
<div class="dot g" style="left:822.00px;top:16px"><svg width="24" height="24" viewBox="0 0 24 24" fill="none" stroke="#1fa458" stroke-width="1.05" stroke-linecap="round" stroke-linejoin="round"><path d="M8.1 12.7l2.6 3.1L15.6 7.4"/></svg></div>
<div class="dot g" style="left:905.00px;top:16px"><svg width="24" height="24" viewBox="0 0 24 24" fill="none" stroke="#1fa458" stroke-width="1.05" stroke-linecap="round" stroke-linejoin="round"><path d="M8.1 12.7l2.6 3.1L15.6 7.4"/></svg></div>
<div class="dot g" style="left:987.00px;top:16px"><svg width="24" height="24" viewBox="0 0 24 24" fill="none" stroke="#1fa458" stroke-width="1.05" stroke-linecap="round" stroke-linejoin="round"><path d="M8.1 12.7l2.6 3.1L15.6 7.4"/></svg></div>
<div class="dot g" style="left:1069.00px;top:16px"><svg width="24" height="24" viewBox="0 0 24 24" fill="none" stroke="#1fa458" stroke-width="1.05" stroke-linecap="round" stroke-linejoin="round"><path d="M8.1 12.7l2.6 3.1L15.6 7.4"/></svg></div>
<div class="dot g" style="left:1152.00px;top:16px"><svg width="24" height="24" viewBox="0 0 24 24" fill="none" stroke="#1fa458" stroke-width="1.05" stroke-linecap="round" stroke-linejoin="round"><path d="M8.1 12.7l2.6 3.1L15.6 7.4"/></svg></div>
<div class="dot g" style="left:1234.00px;top:16px"><svg width="24" height="24" viewBox="0 0 24 24" fill="none" stroke="#1fa458" stroke-width="1.05" stroke-linecap="round" stroke-linejoin="round"><path d="M8.1 12.7l2.6 3.1L15.6 7.4"/></svg></div>
<div class="dot g" style="left:1316.00px;top:16px"><svg width="24" height="24" viewBox="0 0 24 24" fill="none" stroke="#1fa458" stroke-width="1.05" stroke-linecap="round" stroke-linejoin="round"><path d="M8.1 12.7l2.6 3.1L15.6 7.4"/></svg></div>
<div class="dot r" style="left:1398.00px;top:16px"><svg width="24" height="24" viewBox="0 0 24 24" fill="none" stroke="#d42a2a" stroke-width="1" stroke-linecap="round"><path d="M15.8 7.2L9.2 16.8M10 8.3l5 7.9"/></svg></div>
<div class="dot r" style="left:1481.00px;top:16px"><svg width="24" height="24" viewBox="0 0 24 24" fill="none" stroke="#d42a2a" stroke-width="1" stroke-linecap="round"><path d="M15.8 7.2L9.2 16.8M10 8.3l5 7.9"/></svg></div>
<div class="dot r" style="left:1563.00px;top:16px"><svg width="24" height="24" viewBox="0 0 24 24" fill="none" stroke="#d42a2a" stroke-width="1" stroke-linecap="round"><path d="M15.8 7.2L9.2 16.8M10 8.3l5 7.9"/></svg></div>
</div>
<div class="row" style="top:134px;height:57px">
<div style="position:absolute;top:18px;height:20px;line-height:20px;font-size:15px;color:#111827;white-space:nowrap;letter-spacing:0.362px;-webkit-text-stroke:0.2px #111827;left:16.30px;">2-6</div>
<div style="position:absolute;top:8px;height:20px;line-height:20px;font-size:15px;color:#0f86cc;white-space:nowrap;letter-spacing:-0.876px;-webkit-text-stroke:0.3px #0f86cc;left:126.00px;">MEDLAB</div>
<div style="position:absolute;top:31px;height:18px;line-height:18px;font-size:13px;color:#6b7280;white-space:nowrap;letter-spacing:-0.576px;-webkit-text-stroke:0.15px #6b7280;left:126.00px;">07.11.1986 - Laufend</div>
<div style="position:absolute;top:18px;height:19px;line-height:19px;font-size:15px;color:#111827;white-space:nowrap;letter-spacing:-0.589px;right:1004.30px;border-bottom:1px dotted #9ca3af;-webkit-text-stroke:.3px #111827;">1.992,17 €</div>
<div class="dot g" style="left:658.00px;top:16px"><svg width="24" height="24" viewBox="0 0 24 24" fill="none" stroke="#1fa458" stroke-width="1.05" stroke-linecap="round" stroke-linejoin="round"><path d="M8.1 12.7l2.6 3.1L15.6 7.4"/></svg></div>
<div class="dot g" style="left:740.00px;top:16px"><svg width="24" height="24" viewBox="0 0 24 24" fill="none" stroke="#1fa458" stroke-width="1.05" stroke-linecap="round" stroke-linejoin="round"><path d="M8.1 12.7l2.6 3.1L15.6 7.4"/></svg></div>
<div class="dot g" style="left:822.00px;top:16px"><svg width="24" height="24" viewBox="0 0 24 24" fill="none" stroke="#1fa458" stroke-width="1.05" stroke-linecap="round" stroke-linejoin="round"><path d="M8.1 12.7l2.6 3.1L15.6 7.4"/></svg></div>
<div class="dot g" style="left:905.00px;top:16px"><svg width="24" height="24" viewBox="0 0 24 24" fill="none" stroke="#1fa458" stroke-width="1.05" stroke-linecap="round" stroke-linejoin="round"><path d="M8.1 12.7l2.6 3.1L15.6 7.4"/></svg></div>
<div class="dot g" style="left:987.00px;top:16px"><svg width="24" height="24" viewBox="0 0 24 24" fill="none" stroke="#1fa458" stroke-width="1.05" stroke-linecap="round" stroke-linejoin="round"><path d="M8.1 12.7l2.6 3.1L15.6 7.4"/></svg></div>
<div class="dot g" style="left:1069.00px;top:16px"><svg width="24" height="24" viewBox="0 0 24 24" fill="none" stroke="#1fa458" stroke-width="1.05" stroke-linecap="round" stroke-linejoin="round"><path d="M8.1 12.7l2.6 3.1L15.6 7.4"/></svg></div>
<div class="dot g" style="left:1152.00px;top:16px"><svg width="24" height="24" viewBox="0 0 24 24" fill="none" stroke="#1fa458" stroke-width="1.05" stroke-linecap="round" stroke-linejoin="round"><path d="M8.1 12.7l2.6 3.1L15.6 7.4"/></svg></div>
<div class="dot g" style="left:1234.00px;top:16px"><svg width="24" height="24" viewBox="0 0 24 24" fill="none" stroke="#1fa458" stroke-width="1.05" stroke-linecap="round" stroke-linejoin="round"><path d="M8.1 12.7l2.6 3.1L15.6 7.4"/></svg></div>
<div class="dot g" style="left:1316.00px;top:16px"><svg width="24" height="24" viewBox="0 0 24 24" fill="none" stroke="#1fa458" stroke-width="1.05" stroke-linecap="round" stroke-linejoin="round"><path d="M8.1 12.7l2.6 3.1L15.6 7.4"/></svg></div>
<div class="dot r" style="left:1398.00px;top:16px"><svg width="24" height="24" viewBox="0 0 24 24" fill="none" stroke="#d42a2a" stroke-width="1" stroke-linecap="round"><path d="M15.8 7.2L9.2 16.8M10 8.3l5 7.9"/></svg></div>
<div class="dot r" style="left:1481.00px;top:16px"><svg width="24" height="24" viewBox="0 0 24 24" fill="none" stroke="#d42a2a" stroke-width="1" stroke-linecap="round"><path d="M15.8 7.2L9.2 16.8M10 8.3l5 7.9"/></svg></div>
<div class="dot r" style="left:1563.00px;top:16px"><svg width="24" height="24" viewBox="0 0 24 24" fill="none" stroke="#d42a2a" stroke-width="1" stroke-linecap="round"><path d="M15.8 7.2L9.2 16.8M10 8.3l5 7.9"/></svg></div>
</div>
<div class="row" style="top:191px;height:57px">
<div style="position:absolute;top:18px;height:20px;line-height:20px;font-size:15px;color:#111827;white-space:nowrap;letter-spacing:0.362px;-webkit-text-stroke:0.2px #111827;left:16.30px;">7-8</div>
<div style="position:absolute;top:8px;height:20px;line-height:20px;font-size:15px;color:#0f86cc;white-space:nowrap;letter-spacing:-0.197px;-webkit-text-stroke:0.3px #0f86cc;left:126.00px;">Dragana Stosic</div>
<div style="position:absolute;top:31px;height:18px;line-height:18px;font-size:13px;color:#6b7280;white-space:nowrap;letter-spacing:-0.29px;-webkit-text-stroke:0.15px #6b7280;left:126.00px;">01.08.2020 - 31.07.2026</div>
<div style="position:absolute;top:18px;height:19px;line-height:19px;font-size:15px;color:#111827;white-space:nowrap;letter-spacing:-0.014px;right:1003.72px;border-bottom:1px dotted #9ca3af;-webkit-text-stroke:.3px #111827;">762,73 €</div>
<div class="dot g" style="left:658.00px;top:16px"><svg width="24" height="24" viewBox="0 0 24 24" fill="none" stroke="#1fa458" stroke-width="1.05" stroke-linecap="round" stroke-linejoin="round"><path d="M8.1 12.7l2.6 3.1L15.6 7.4"/></svg></div>
<div class="dot g" style="left:740.00px;top:16px"><svg width="24" height="24" viewBox="0 0 24 24" fill="none" stroke="#1fa458" stroke-width="1.05" stroke-linecap="round" stroke-linejoin="round"><path d="M8.1 12.7l2.6 3.1L15.6 7.4"/></svg></div>
<div class="dot g" style="left:822.00px;top:16px"><svg width="24" height="24" viewBox="0 0 24 24" fill="none" stroke="#1fa458" stroke-width="1.05" stroke-linecap="round" stroke-linejoin="round"><path d="M8.1 12.7l2.6 3.1L15.6 7.4"/></svg></div>
<div class="dot g" style="left:905.00px;top:16px"><svg width="24" height="24" viewBox="0 0 24 24" fill="none" stroke="#1fa458" stroke-width="1.05" stroke-linecap="round" stroke-linejoin="round"><path d="M8.1 12.7l2.6 3.1L15.6 7.4"/></svg></div>
<div class="dot g" style="left:987.00px;top:16px"><svg width="24" height="24" viewBox="0 0 24 24" fill="none" stroke="#1fa458" stroke-width="1.05" stroke-linecap="round" stroke-linejoin="round"><path d="M8.1 12.7l2.6 3.1L15.6 7.4"/></svg></div>
<div class="dot g" style="left:1069.00px;top:16px"><svg width="24" height="24" viewBox="0 0 24 24" fill="none" stroke="#1fa458" stroke-width="1.05" stroke-linecap="round" stroke-linejoin="round"><path d="M8.1 12.7l2.6 3.1L15.6 7.4"/></svg></div>
<div class="dot r" style="left:1152.00px;top:16px"><svg width="24" height="24" viewBox="0 0 24 24" fill="none" stroke="#d42a2a" stroke-width="1" stroke-linecap="round"><path d="M15.8 7.2L9.2 16.8M10 8.3l5 7.9"/></svg></div>
<div class="dot r" style="left:1234.00px;top:16px"><svg width="24" height="24" viewBox="0 0 24 24" fill="none" stroke="#d42a2a" stroke-width="1" stroke-linecap="round"><path d="M15.8 7.2L9.2 16.8M10 8.3l5 7.9"/></svg></div>
<div class="dot r" style="left:1316.00px;top:16px"><svg width="24" height="24" viewBox="0 0 24 24" fill="none" stroke="#d42a2a" stroke-width="1" stroke-linecap="round"><path d="M15.8 7.2L9.2 16.8M10 8.3l5 7.9"/></svg></div>
<div class="dot r" style="left:1398.00px;top:16px"><svg width="24" height="24" viewBox="0 0 24 24" fill="none" stroke="#d42a2a" stroke-width="1" stroke-linecap="round"><path d="M15.8 7.2L9.2 16.8M10 8.3l5 7.9"/></svg></div>
<div class="dot r" style="left:1481.00px;top:16px"><svg width="24" height="24" viewBox="0 0 24 24" fill="none" stroke="#d42a2a" stroke-width="1" stroke-linecap="round"><path d="M15.8 7.2L9.2 16.8M10 8.3l5 7.9"/></svg></div>
<div class="dot r" style="left:1563.00px;top:16px"><svg width="24" height="24" viewBox="0 0 24 24" fill="none" stroke="#d42a2a" stroke-width="1" stroke-linecap="round"><path d="M15.8 7.2L9.2 16.8M10 8.3l5 7.9"/></svg></div>
</div>
<div class="row" style="top:248px;height:57px">
<div style="position:absolute;top:18px;height:20px;line-height:20px;font-size:15px;color:#111827;white-space:nowrap;letter-spacing:-0.205px;-webkit-text-stroke:0.2px #111827;left:16.30px;">9-10</div>
<div style="position:absolute;top:8px;height:20px;line-height:20px;font-size:15px;color:#0f86cc;white-space:nowrap;letter-spacing:-0.132px;-webkit-text-stroke:0.3px #0f86cc;left:126.00px;">Matthias Huber</div>
<div style="position:absolute;top:31px;height:18px;line-height:18px;font-size:13px;color:#6b7280;white-space:nowrap;letter-spacing:-0.416px;-webkit-text-stroke:0.15px #6b7280;left:126.00px;">01.05.1993 - Laufend</div>
<div style="position:absolute;top:18px;height:19px;line-height:19px;font-size:15px;color:#111827;white-space:nowrap;letter-spacing:-0.101px;right:1003.81px;border-bottom:1px dotted #9ca3af;-webkit-text-stroke:.3px #111827;">1.035,32 €</div>
<div class="dot g" style="left:658.00px;top:16px"><svg width="24" height="24" viewBox="0 0 24 24" fill="none" stroke="#1fa458" stroke-width="1.05" stroke-linecap="round" stroke-linejoin="round"><path d="M8.1 12.7l2.6 3.1L15.6 7.4"/></svg></div>
<div class="dot g" style="left:740.00px;top:16px"><svg width="24" height="24" viewBox="0 0 24 24" fill="none" stroke="#1fa458" stroke-width="1.05" stroke-linecap="round" stroke-linejoin="round"><path d="M8.1 12.7l2.6 3.1L15.6 7.4"/></svg></div>
<div class="dot g" style="left:822.00px;top:16px"><svg width="24" height="24" viewBox="0 0 24 24" fill="none" stroke="#1fa458" stroke-width="1.05" stroke-linecap="round" stroke-linejoin="round"><path d="M8.1 12.7l2.6 3.1L15.6 7.4"/></svg></div>
<div class="dot g" style="left:905.00px;top:16px"><svg width="24" height="24" viewBox="0 0 24 24" fill="none" stroke="#1fa458" stroke-width="1.05" stroke-linecap="round" stroke-linejoin="round"><path d="M8.1 12.7l2.6 3.1L15.6 7.4"/></svg></div>
<div class="dot g" style="left:987.00px;top:16px"><svg width="24" height="24" viewBox="0 0 24 24" fill="none" stroke="#1fa458" stroke-width="1.05" stroke-linecap="round" stroke-linejoin="round"><path d="M8.1 12.7l2.6 3.1L15.6 7.4"/></svg></div>
<div class="dot g" style="left:1069.00px;top:16px"><svg width="24" height="24" viewBox="0 0 24 24" fill="none" stroke="#1fa458" stroke-width="1.05" stroke-linecap="round" stroke-linejoin="round"><path d="M8.1 12.7l2.6 3.1L15.6 7.4"/></svg></div>
<div class="dot g" style="left:1152.00px;top:16px"><svg width="24" height="24" viewBox="0 0 24 24" fill="none" stroke="#1fa458" stroke-width="1.05" stroke-linecap="round" stroke-linejoin="round"><path d="M8.1 12.7l2.6 3.1L15.6 7.4"/></svg></div>
<div class="dot g" style="left:1234.00px;top:16px"><svg width="24" height="24" viewBox="0 0 24 24" fill="none" stroke="#1fa458" stroke-width="1.05" stroke-linecap="round" stroke-linejoin="round"><path d="M8.1 12.7l2.6 3.1L15.6 7.4"/></svg></div>
<div class="dot g" style="left:1316.00px;top:16px"><svg width="24" height="24" viewBox="0 0 24 24" fill="none" stroke="#1fa458" stroke-width="1.05" stroke-linecap="round" stroke-linejoin="round"><path d="M8.1 12.7l2.6 3.1L15.6 7.4"/></svg></div>
<div class="dot r" style="left:1398.00px;top:16px"><svg width="24" height="24" viewBox="0 0 24 24" fill="none" stroke="#d42a2a" stroke-width="1" stroke-linecap="round"><path d="M15.8 7.2L9.2 16.8M10 8.3l5 7.9"/></svg></div>
<div class="dot r" style="left:1481.00px;top:16px"><svg width="24" height="24" viewBox="0 0 24 24" fill="none" stroke="#d42a2a" stroke-width="1" stroke-linecap="round"><path d="M15.8 7.2L9.2 16.8M10 8.3l5 7.9"/></svg></div>
<div class="dot r" style="left:1563.00px;top:16px"><svg width="24" height="24" viewBox="0 0 24 24" fill="none" stroke="#d42a2a" stroke-width="1" stroke-linecap="round"><path d="M15.8 7.2L9.2 16.8M10 8.3l5 7.9"/></svg></div>
</div>
<div class="row" style="top:305px;height:57px">
<div style="position:absolute;top:18px;height:20px;line-height:20px;font-size:15px;color:#111827;white-space:nowrap;letter-spacing:-0.7px;-webkit-text-stroke:0.2px #111827;left:16.30px;">11-12</div>
<div style="position:absolute;top:8px;height:20px;line-height:20px;font-size:15px;color:#0f86cc;white-space:nowrap;letter-spacing:-0.193px;-webkit-text-stroke:0.3px #0f86cc;left:126.00px;">Markus Wagner</div>
<div style="position:absolute;top:31px;height:18px;line-height:18px;font-size:13px;color:#6b7280;white-space:nowrap;letter-spacing:-0.279px;-webkit-text-stroke:0.15px #6b7280;left:126.00px;">01.07.2007 - Laufend</div>
<div style="position:absolute;top:18px;height:19px;line-height:19px;font-size:15px;color:#111827;white-space:nowrap;letter-spacing:0.272px;right:1003.43px;border-bottom:1px dotted #9ca3af;-webkit-text-stroke:.3px #111827;">653,88 €</div>
<div class="dot g" style="left:658.00px;top:16px"><svg width="24" height="24" viewBox="0 0 24 24" fill="none" stroke="#1fa458" stroke-width="1.05" stroke-linecap="round" stroke-linejoin="round"><path d="M8.1 12.7l2.6 3.1L15.6 7.4"/></svg></div>
<div class="dot g" style="left:740.00px;top:16px"><svg width="24" height="24" viewBox="0 0 24 24" fill="none" stroke="#1fa458" stroke-width="1.05" stroke-linecap="round" stroke-linejoin="round"><path d="M8.1 12.7l2.6 3.1L15.6 7.4"/></svg></div>
<div class="dot g" style="left:822.00px;top:16px"><svg width="24" height="24" viewBox="0 0 24 24" fill="none" stroke="#1fa458" stroke-width="1.05" stroke-linecap="round" stroke-linejoin="round"><path d="M8.1 12.7l2.6 3.1L15.6 7.4"/></svg></div>
<div class="dot g" style="left:905.00px;top:16px"><svg width="24" height="24" viewBox="0 0 24 24" fill="none" stroke="#1fa458" stroke-width="1.05" stroke-linecap="round" stroke-linejoin="round"><path d="M8.1 12.7l2.6 3.1L15.6 7.4"/></svg></div>
<div class="dot g" style="left:987.00px;top:16px"><svg width="24" height="24" viewBox="0 0 24 24" fill="none" stroke="#1fa458" stroke-width="1.05" stroke-linecap="round" stroke-linejoin="round"><path d="M8.1 12.7l2.6 3.1L15.6 7.4"/></svg></div>
<div class="dot g" style="left:1069.00px;top:16px"><svg width="24" height="24" viewBox="0 0 24 24" fill="none" stroke="#1fa458" stroke-width="1.05" stroke-linecap="round" stroke-linejoin="round"><path d="M8.1 12.7l2.6 3.1L15.6 7.4"/></svg></div>
<div class="dot g" style="left:1152.00px;top:16px"><svg width="24" height="24" viewBox="0 0 24 24" fill="none" stroke="#1fa458" stroke-width="1.05" stroke-linecap="round" stroke-linejoin="round"><path d="M8.1 12.7l2.6 3.1L15.6 7.4"/></svg></div>
<div class="dot g" style="left:1234.00px;top:16px"><svg width="24" height="24" viewBox="0 0 24 24" fill="none" stroke="#1fa458" stroke-width="1.05" stroke-linecap="round" stroke-linejoin="round"><path d="M8.1 12.7l2.6 3.1L15.6 7.4"/></svg></div>
<div class="dot r" style="left:1316.00px;top:16px"><svg width="24" height="24" viewBox="0 0 24 24" fill="none" stroke="#d42a2a" stroke-width="1" stroke-linecap="round"><path d="M15.8 7.2L9.2 16.8M10 8.3l5 7.9"/></svg></div>
<div class="dot r" style="left:1398.00px;top:16px"><svg width="24" height="24" viewBox="0 0 24 24" fill="none" stroke="#d42a2a" stroke-width="1" stroke-linecap="round"><path d="M15.8 7.2L9.2 16.8M10 8.3l5 7.9"/></svg></div>
<div class="dot r" style="left:1481.00px;top:16px"><svg width="24" height="24" viewBox="0 0 24 24" fill="none" stroke="#d42a2a" stroke-width="1" stroke-linecap="round"><path d="M15.8 7.2L9.2 16.8M10 8.3l5 7.9"/></svg></div>
<div class="dot r" style="left:1563.00px;top:16px"><svg width="24" height="24" viewBox="0 0 24 24" fill="none" stroke="#d42a2a" stroke-width="1" stroke-linecap="round"><path d="M15.8 7.2L9.2 16.8M10 8.3l5 7.9"/></svg></div>
</div>
<div class="row" style="top:362px;height:57px">
<div style="position:absolute;top:18px;height:20px;line-height:20px;font-size:15px;color:#111827;white-space:nowrap;letter-spacing:-0.7px;-webkit-text-stroke:0.2px #111827;left:16.30px;">13</div>
<div style="position:absolute;top:8px;height:20px;line-height:20px;font-size:15px;color:#0f86cc;white-space:nowrap;letter-spacing:-0.198px;-webkit-text-stroke:0.3px #0f86cc;left:126.00px;">Sabine Schuster</div>
<div style="position:absolute;top:31px;height:18px;line-height:18px;font-size:13px;color:#6b7280;white-space:nowrap;letter-spacing:-0.562px;-webkit-text-stroke:0.15px #6b7280;left:126.00px;">01.02.2021 - 31.01.2027</div>
<div style="position:absolute;top:18px;height:19px;line-height:19px;font-size:15px;color:#111827;white-space:nowrap;letter-spacing:-0.056px;right:1003.76px;border-bottom:1px dotted #9ca3af;-webkit-text-stroke:.3px #111827;">513,46 €</div>
<div class="dot g" style="left:658.00px;top:16px"><svg width="24" height="24" viewBox="0 0 24 24" fill="none" stroke="#1fa458" stroke-width="1.05" stroke-linecap="round" stroke-linejoin="round"><path d="M8.1 12.7l2.6 3.1L15.6 7.4"/></svg></div>
<div class="dot g" style="left:740.00px;top:16px"><svg width="24" height="24" viewBox="0 0 24 24" fill="none" stroke="#1fa458" stroke-width="1.05" stroke-linecap="round" stroke-linejoin="round"><path d="M8.1 12.7l2.6 3.1L15.6 7.4"/></svg></div>
<div class="dot g" style="left:822.00px;top:16px"><svg width="24" height="24" viewBox="0 0 24 24" fill="none" stroke="#1fa458" stroke-width="1.05" stroke-linecap="round" stroke-linejoin="round"><path d="M8.1 12.7l2.6 3.1L15.6 7.4"/></svg></div>
<div class="dot g" style="left:905.00px;top:16px"><svg width="24" height="24" viewBox="0 0 24 24" fill="none" stroke="#1fa458" stroke-width="1.05" stroke-linecap="round" stroke-linejoin="round"><path d="M8.1 12.7l2.6 3.1L15.6 7.4"/></svg></div>
<div class="dot g" style="left:987.00px;top:16px"><svg width="24" height="24" viewBox="0 0 24 24" fill="none" stroke="#1fa458" stroke-width="1.05" stroke-linecap="round" stroke-linejoin="round"><path d="M8.1 12.7l2.6 3.1L15.6 7.4"/></svg></div>
<div class="dot g" style="left:1069.00px;top:16px"><svg width="24" height="24" viewBox="0 0 24 24" fill="none" stroke="#1fa458" stroke-width="1.05" stroke-linecap="round" stroke-linejoin="round"><path d="M8.1 12.7l2.6 3.1L15.6 7.4"/></svg></div>
<div class="dot g" style="left:1152.00px;top:16px"><svg width="24" height="24" viewBox="0 0 24 24" fill="none" stroke="#1fa458" stroke-width="1.05" stroke-linecap="round" stroke-linejoin="round"><path d="M8.1 12.7l2.6 3.1L15.6 7.4"/></svg></div>
<div class="dot g" style="left:1234.00px;top:16px"><svg width="24" height="24" viewBox="0 0 24 24" fill="none" stroke="#1fa458" stroke-width="1.05" stroke-linecap="round" stroke-linejoin="round"><path d="M8.1 12.7l2.6 3.1L15.6 7.4"/></svg></div>
<div class="dot g" style="left:1316.00px;top:16px"><svg width="24" height="24" viewBox="0 0 24 24" fill="none" stroke="#1fa458" stroke-width="1.05" stroke-linecap="round" stroke-linejoin="round"><path d="M8.1 12.7l2.6 3.1L15.6 7.4"/></svg></div>
<div class="dot r" style="left:1398.00px;top:16px"><svg width="24" height="24" viewBox="0 0 24 24" fill="none" stroke="#d42a2a" stroke-width="1" stroke-linecap="round"><path d="M15.8 7.2L9.2 16.8M10 8.3l5 7.9"/></svg></div>
<div class="dot r" style="left:1481.00px;top:16px"><svg width="24" height="24" viewBox="0 0 24 24" fill="none" stroke="#d42a2a" stroke-width="1" stroke-linecap="round"><path d="M15.8 7.2L9.2 16.8M10 8.3l5 7.9"/></svg></div>
<div class="dot r" style="left:1563.00px;top:16px"><svg width="24" height="24" viewBox="0 0 24 24" fill="none" stroke="#d42a2a" stroke-width="1" stroke-linecap="round"><path d="M15.8 7.2L9.2 16.8M10 8.3l5 7.9"/></svg></div>
</div>
<div class="row" style="top:419px;height:41px">
<div style="position:absolute;top:10px;height:20px;line-height:20px;font-size:15px;color:#111827;white-space:nowrap;letter-spacing:-0.7px;-webkit-text-stroke:0.2px #111827;left:16.30px;">14</div>
<div style="position:absolute;top:10px;height:20px;line-height:20px;font-size:15px;color:#6b7280;white-space:nowrap;letter-spacing:-0.353px;font-style:italic;-webkit-text-stroke:0.2px #6b7280;left:126.70px;">Leerstand</div>
<div style="position:absolute;top:10px;height:20px;line-height:20px;font-size:15px;color:#111827;white-space:nowrap;font-weight:700;right:1004.00px;">-</div>
<div class="dash" style="left:664.70px;top:20px"></div>
<div class="dash" style="left:746.70px;top:20px"></div>
<div class="dash" style="left:828.70px;top:20px"></div>
<div class="dash" style="left:911.70px;top:20px"></div>
<div class="dash" style="left:993.70px;top:20px"></div>
<div class="dash" style="left:1075.70px;top:20px"></div>
<div class="dash" style="left:1158.70px;top:20px"></div>
<div class="dash" style="left:1240.70px;top:20px"></div>
<div class="dash" style="left:1322.70px;top:20px"></div>
<div class="dash" style="left:1404.70px;top:20px"></div>
<div class="dash" style="left:1487.70px;top:20px"></div>
<div class="dash" style="left:1569.70px;top:20px"></div>
</div>
<div class="row" style="top:460px;height:57px">
<div style="position:absolute;top:18px;height:20px;line-height:20px;font-size:15px;color:#111827;white-space:nowrap;letter-spacing:-0.7px;-webkit-text-stroke:0.2px #111827;left:16.30px;">15</div>
<div style="position:absolute;top:8px;height:20px;line-height:20px;font-size:15px;color:#0f86cc;white-space:nowrap;letter-spacing:-0.119px;-webkit-text-stroke:0.3px #0f86cc;left:126.00px;">Vesna Stojanovic</div>
<div style="position:absolute;top:31px;height:18px;line-height:18px;font-size:13px;color:#6b7280;white-space:nowrap;letter-spacing:-0.258px;-webkit-text-stroke:0.15px #6b7280;left:126.00px;">01.06.2024 - Laufend</div>
<div style="position:absolute;top:18px;height:19px;line-height:19px;font-size:15px;color:#111827;white-space:nowrap;letter-spacing:0.372px;right:1003.33px;border-bottom:1px dotted #9ca3af;-webkit-text-stroke:.3px #111827;">246,40 €</div>
<div class="dot g" style="left:658.00px;top:16px"><svg width="24" height="24" viewBox="0 0 24 24" fill="none" stroke="#1fa458" stroke-width="1.05" stroke-linecap="round" stroke-linejoin="round"><path d="M8.1 12.7l2.6 3.1L15.6 7.4"/></svg></div>
<div class="dot g" style="left:740.00px;top:16px"><svg width="24" height="24" viewBox="0 0 24 24" fill="none" stroke="#1fa458" stroke-width="1.05" stroke-linecap="round" stroke-linejoin="round"><path d="M8.1 12.7l2.6 3.1L15.6 7.4"/></svg></div>
<div class="dot g" style="left:822.00px;top:16px"><svg width="24" height="24" viewBox="0 0 24 24" fill="none" stroke="#1fa458" stroke-width="1.05" stroke-linecap="round" stroke-linejoin="round"><path d="M8.1 12.7l2.6 3.1L15.6 7.4"/></svg></div>
<div class="dot g" style="left:905.00px;top:16px"><svg width="24" height="24" viewBox="0 0 24 24" fill="none" stroke="#1fa458" stroke-width="1.05" stroke-linecap="round" stroke-linejoin="round"><path d="M8.1 12.7l2.6 3.1L15.6 7.4"/></svg></div>
<div class="dot g" style="left:987.00px;top:16px"><svg width="24" height="24" viewBox="0 0 24 24" fill="none" stroke="#1fa458" stroke-width="1.05" stroke-linecap="round" stroke-linejoin="round"><path d="M8.1 12.7l2.6 3.1L15.6 7.4"/></svg></div>
<div class="dot g" style="left:1069.00px;top:16px"><svg width="24" height="24" viewBox="0 0 24 24" fill="none" stroke="#1fa458" stroke-width="1.05" stroke-linecap="round" stroke-linejoin="round"><path d="M8.1 12.7l2.6 3.1L15.6 7.4"/></svg></div>
<div class="dot g" style="left:1152.00px;top:16px"><svg width="24" height="24" viewBox="0 0 24 24" fill="none" stroke="#1fa458" stroke-width="1.05" stroke-linecap="round" stroke-linejoin="round"><path d="M8.1 12.7l2.6 3.1L15.6 7.4"/></svg></div>
<div class="dot g" style="left:1234.00px;top:16px"><svg width="24" height="24" viewBox="0 0 24 24" fill="none" stroke="#1fa458" stroke-width="1.05" stroke-linecap="round" stroke-linejoin="round"><path d="M8.1 12.7l2.6 3.1L15.6 7.4"/></svg></div>
<div class="dot g" style="left:1316.00px;top:16px"><svg width="24" height="24" viewBox="0 0 24 24" fill="none" stroke="#1fa458" stroke-width="1.05" stroke-linecap="round" stroke-linejoin="round"><path d="M8.1 12.7l2.6 3.1L15.6 7.4"/></svg></div>
<div class="dot r" style="left:1398.00px;top:16px"><svg width="24" height="24" viewBox="0 0 24 24" fill="none" stroke="#d42a2a" stroke-width="1" stroke-linecap="round"><path d="M15.8 7.2L9.2 16.8M10 8.3l5 7.9"/></svg></div>
<div class="dot r" style="left:1481.00px;top:16px"><svg width="24" height="24" viewBox="0 0 24 24" fill="none" stroke="#d42a2a" stroke-width="1" stroke-linecap="round"><path d="M15.8 7.2L9.2 16.8M10 8.3l5 7.9"/></svg></div>
<div class="dot r" style="left:1563.00px;top:16px"><svg width="24" height="24" viewBox="0 0 24 24" fill="none" stroke="#d42a2a" stroke-width="1" stroke-linecap="round"><path d="M15.8 7.2L9.2 16.8M10 8.3l5 7.9"/></svg></div>
</div>
<div class="row" style="top:517px;height:57px">
<div style="position:absolute;top:18px;height:20px;line-height:20px;font-size:15px;color:#111827;white-space:nowrap;letter-spacing:-0.7px;-webkit-text-stroke:0.2px #111827;left:16.30px;">16</div>
<div style="position:absolute;top:8px;height:20px;line-height:20px;font-size:15px;color:#0f86cc;white-space:nowrap;letter-spacing:-0.357px;-webkit-text-stroke:0.3px #0f86cc;left:126.00px;">Arben Hoxha</div>
<div style="position:absolute;top:31px;height:18px;line-height:18px;font-size:13px;color:#6b7280;white-space:nowrap;letter-spacing:-0.519px;-webkit-text-stroke:0.15px #6b7280;left:126.00px;">01.12.2023 - 30.11.2026</div>
<div style="position:absolute;top:18px;height:19px;line-height:19px;font-size:15px;color:#111827;white-space:nowrap;letter-spacing:-0.056px;right:1003.76px;border-bottom:1px dotted #9ca3af;-webkit-text-stroke:.3px #111827;">384,10 €</div>
<div class="dot g" style="left:658.00px;top:16px"><svg width="24" height="24" viewBox="0 0 24 24" fill="none" stroke="#1fa458" stroke-width="1.05" stroke-linecap="round" stroke-linejoin="round"><path d="M8.1 12.7l2.6 3.1L15.6 7.4"/></svg></div>
<div class="dot g" style="left:740.00px;top:16px"><svg width="24" height="24" viewBox="0 0 24 24" fill="none" stroke="#1fa458" stroke-width="1.05" stroke-linecap="round" stroke-linejoin="round"><path d="M8.1 12.7l2.6 3.1L15.6 7.4"/></svg></div>
<div class="dot g" style="left:822.00px;top:16px"><svg width="24" height="24" viewBox="0 0 24 24" fill="none" stroke="#1fa458" stroke-width="1.05" stroke-linecap="round" stroke-linejoin="round"><path d="M8.1 12.7l2.6 3.1L15.6 7.4"/></svg></div>
<div class="dot g" style="left:905.00px;top:16px"><svg width="24" height="24" viewBox="0 0 24 24" fill="none" stroke="#1fa458" stroke-width="1.05" stroke-linecap="round" stroke-linejoin="round"><path d="M8.1 12.7l2.6 3.1L15.6 7.4"/></svg></div>
<div class="dot g" style="left:987.00px;top:16px"><svg width="24" height="24" viewBox="0 0 24 24" fill="none" stroke="#1fa458" stroke-width="1.05" stroke-linecap="round" stroke-linejoin="round"><path d="M8.1 12.7l2.6 3.1L15.6 7.4"/></svg></div>
<div class="dot g" style="left:1069.00px;top:16px"><svg width="24" height="24" viewBox="0 0 24 24" fill="none" stroke="#1fa458" stroke-width="1.05" stroke-linecap="round" stroke-linejoin="round"><path d="M8.1 12.7l2.6 3.1L15.6 7.4"/></svg></div>
<div class="dot g" style="left:1152.00px;top:16px"><svg width="24" height="24" viewBox="0 0 24 24" fill="none" stroke="#1fa458" stroke-width="1.05" stroke-linecap="round" stroke-linejoin="round"><path d="M8.1 12.7l2.6 3.1L15.6 7.4"/></svg></div>
<div class="dot g" style="left:1234.00px;top:16px"><svg width="24" height="24" viewBox="0 0 24 24" fill="none" stroke="#1fa458" stroke-width="1.05" stroke-linecap="round" stroke-linejoin="round"><path d="M8.1 12.7l2.6 3.1L15.6 7.4"/></svg></div>
<div class="dot g" style="left:1316.00px;top:16px"><svg width="24" height="24" viewBox="0 0 24 24" fill="none" stroke="#1fa458" stroke-width="1.05" stroke-linecap="round" stroke-linejoin="round"><path d="M8.1 12.7l2.6 3.1L15.6 7.4"/></svg></div>
<div class="dot r" style="left:1398.00px;top:16px"><svg width="24" height="24" viewBox="0 0 24 24" fill="none" stroke="#d42a2a" stroke-width="1" stroke-linecap="round"><path d="M15.8 7.2L9.2 16.8M10 8.3l5 7.9"/></svg></div>
<div class="dot r" style="left:1481.00px;top:16px"><svg width="24" height="24" viewBox="0 0 24 24" fill="none" stroke="#d42a2a" stroke-width="1" stroke-linecap="round"><path d="M15.8 7.2L9.2 16.8M10 8.3l5 7.9"/></svg></div>
<div class="dot r" style="left:1563.00px;top:16px"><svg width="24" height="24" viewBox="0 0 24 24" fill="none" stroke="#d42a2a" stroke-width="1" stroke-linecap="round"><path d="M15.8 7.2L9.2 16.8M10 8.3l5 7.9"/></svg></div>
</div>
</div>
<div class="abs" style="left:1916.1px;top:0;width:2.8px;height:172.5px;background:#64b5f6;border-radius:0 0 2px 2px;z-index:41"></div>
<div class="abs" style="left:1856px;top:952px;width:48px;height:48px;border-radius:50%;background:#fff;border:1px solid #eceef1;box-shadow:0 2px 8px rgba(15,23,42,.10);z-index:50"><svg class="" width="24" height="24" viewBox="0 0 24 24" fill="none" stroke="#4b5563" stroke-width="1.5" stroke-linecap="round" stroke-linejoin="round" style="position:absolute;left:11px;top:10.3px"><path d="M10.5 1.5H8.25A2.25 2.25 0 006 3.75v16.5a2.25 2.25 0 002.25 2.25h7.5A2.25 2.25 0 0018 20.25V3.75a2.25 2.25 0 00-2.25-2.25H13.5m-3 0V3h3V1.5m-3 0h3m-3 18.75h3"/></svg></div>
<svg class="abs" style="left:1860px;top:1020px;z-index:50;filter:drop-shadow(0 2px 3px rgba(15,23,42,.18))" width="48" height="48" viewBox="0 0 48 48">
<defs>
<linearGradient id="sky" x1="0" y1="0" x2="0" y2="1"><stop offset="0.06" stop-color="#7fd6f7"/><stop offset=".22" stop-color="#d9f3c8"/><stop offset=".36" stop-color="#fff0a8"/><stop offset=".5" stop-color="#ffc890"/><stop offset=".64" stop-color="#ff9c7c"/><stop offset="1" stop-color="#ff9478"/></linearGradient>
<linearGradient id="ring" x1="0" y1="0.3" x2="1" y2="0.45"><stop offset="0" stop-color="#78c24e"/><stop offset=".3" stop-color="#a6d878"/><stop offset=".62" stop-color="#d9d98a"/><stop offset=".85" stop-color="#ffc27e"/><stop offset="1" stop-color="#ffb070"/></linearGradient>
<linearGradient id="ringb" x1="0" y1="0" x2="0" y2="1"><stop offset=".55" stop-color="#b4d81e" stop-opacity="0"/><stop offset=".85" stop-color="#b4d81e" stop-opacity="1"/></linearGradient>
<linearGradient id="isle" x1="0.1" y1="1" x2="0.8" y2="0"><stop offset="0" stop-color="#4f9a1c"/><stop offset=".45" stop-color="#a6cf1c"/><stop offset="1" stop-color="#fff21a"/></linearGradient>
<clipPath id="cc"><circle cx="24" cy="24" r="20.6"/></clipPath>
</defs>
<circle cx="24" cy="24" r="24" fill="url(#ring)"/>
<circle cx="24" cy="24" r="24" fill="url(#ringb)"/>
<g clip-path="url(#cc)">
<rect x="0" y="0" width="48" height="48" fill="url(#sky)"/>
<circle cx="37.4" cy="11.4" r="4.6" fill="#ffb80a"/>
<circle cx="37.4" cy="11.4" r="7.6" fill="none" stroke="#b5702a" stroke-width="1.1" stroke-dasharray=".7 1.6" stroke-dashoffset="0" opacity=".75" pathLength="60"/>
<rect x="0" y="29.8" width="48" height="2" fill="#22a7c4"/><rect x="0" y="31.8" width="48" height="1.6" fill="#0c7f9c"/><rect x="0" y="33.4" width="48" height="1.8" fill="#1f9fba"/><rect x="0" y="35.2" width="48" height="1.6" fill="#0b6f88"/><rect x="0" y="36.8" width="48" height="12" fill="#14889f"/>
<path d="M10.4 44.5C11 36 17 29.6 24 29.6S37 36 37.6 44.5z" fill="url(#isle)"/>
<path d="M10 40c4 4.6 24 4.6 28 0v8H10z" fill="#b4d81e"/>
<path d="M21.3 24.6l2.2 4.6M23 27.6l7.8 1.2M31 28.6v1.8" stroke="#e8308a" stroke-width="1.3" fill="none" stroke-linecap="round"/>
<path d="M16.6 30.6C17.6 26 17.6 22 16.9 18l2.2-.3c1 4.2 1.1 8.4.5 12.6z" fill="#8a4a14"/>
<path d="M17.6 17.6c-2.6-2.6-6.4-2.6-8.6.2 1.4-.4 2.4-.2 3.2.4-2 1.2-3 3.4-2.6 5.8 1-1.6 2.2-2.4 3.4-2.6-.6 1.800-.4 3.600.6 5 .4-2.400 1.600-4.400 3.400-5.800z" fill="#2f9e22"/>
<path d="M17.600 17.600c.400-3 2.600-5.400 5.400-6-0.600.8-.8 1.600-.6 2.400 1.600-.6 3.400.2 4.600 2-1.400-.4-2.600-.2-3.400.4 1.800.8 2.800 2.600 2.600 4.800-1-1.400-2.200-2.200-3.600-2.200.8 1.600.8 3.400-.2 5-.4-2.400-1.800-4.400-4.800-6.400z" fill="#3bb82a"/>
<path d="M17.600 17.600c1.800-1.400 4.200-1.400 6 0-2.200 0-4.200.6-6 2.200z" fill="#27901c"/>
</g>
</svg>
</div>
</body></html>
